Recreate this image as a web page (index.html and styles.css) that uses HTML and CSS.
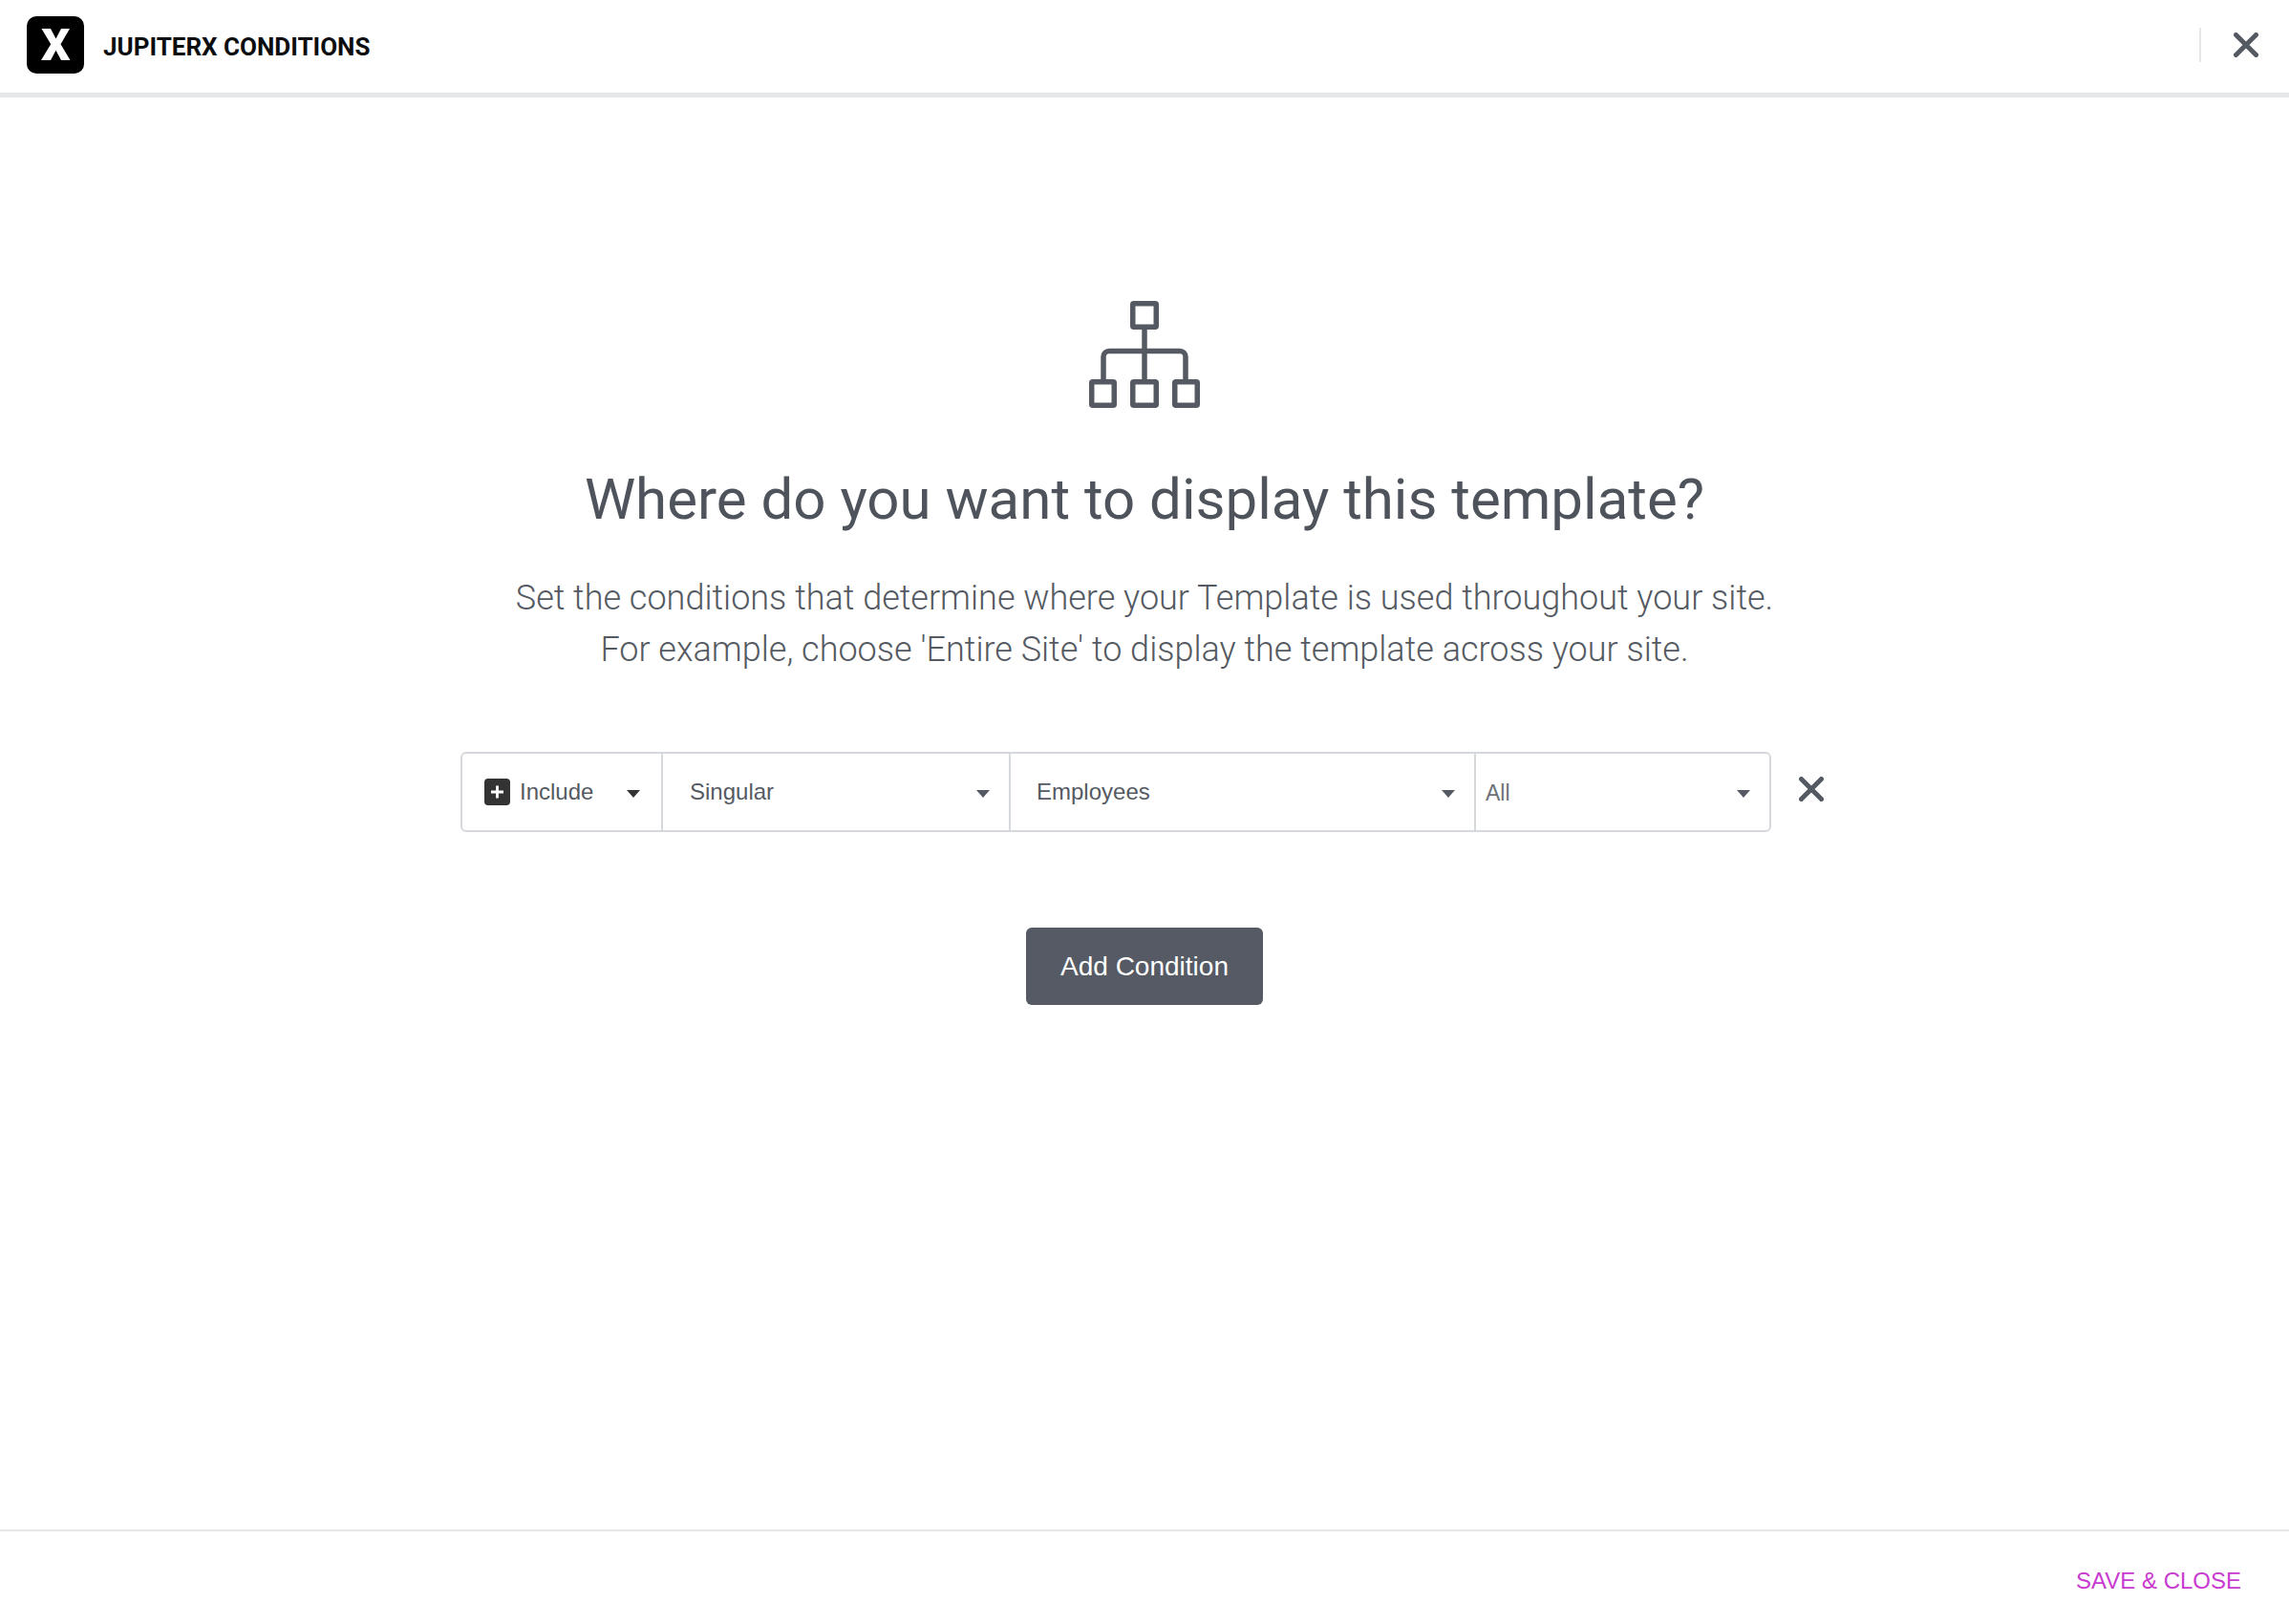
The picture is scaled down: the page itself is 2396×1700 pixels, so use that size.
FILE: index.html
```html
<!DOCTYPE html>
<html lang="en">
<head>
<meta charset="utf-8">
<title>JupiterX Conditions</title>
<link rel="stylesheet" href="styles.css">
</head>
<body>
<div class="app">
  <header class="topbar">
    <div class="logo"><svg viewBox="0 0 60 60" width="60" height="60"><rect width="60" height="60" rx="10" fill="#000"/><path d="M15.500 13H25L30.500 23.500 36 13H45L35.500 29.300 45.500 46H36L30.500 35.800 25 46H15L25.200 29.300Z" fill="#fff"/></svg></div>
    <div class="brand">JUPITERX CONDITIONS</div>
    <div class="topbar-right">
      <span class="vline"></span>
      <svg class="close-icon" viewBox="0 0 26 26" width="26" height="26"><path d="M2.500 2.500L23.500 23.500M23.500 2.500L2.500 23.500" stroke="#555a62" stroke-width="5" stroke-linecap="round" fill="none"/></svg>
    </div>
  </header>
  <main class="content">
    <svg class="tree" viewBox="0 0 116 112" width="116" height="112">
      <g fill="none" stroke="#555a62" stroke-width="5.500" stroke-linejoin="round">
        <rect x="45.750" y="2.750" width="24.500" height="24.500" rx="1"/>
        <rect x="2.750" y="84.750" width="23.500" height="24.500" rx="1"/>
        <rect x="45.750" y="84.750" width="24.500" height="24.500" rx="1"/>
        <rect x="89.750" y="84.750" width="23.500" height="24.500" rx="1"/>
        <path d="M58 28V84M15 84V58.500a6 6 0 0 1 6-6H95a6 6 0 0 1 6 6V84"/>
      </g>
    </svg>
    <h1 class="title">Where do you want to display this template?</h1>
    <p class="intro">Set the conditions that determine where your Template is used throughout your site.<br>For example, choose 'Entire Site' to display the template across your site.</p>
    <div class="row-wrap">
      <div class="cond-row">
        <div class="cell cell-type">
          <span class="plus"><svg viewBox="0 0 27 28" width="27" height="28"><rect width="27" height="28" rx="4" fill="#333"/><path d="M13.500 7.500v13M7 14h13" stroke="#fff" stroke-width="2.800" fill="none"/></svg></span>
          <span class="val">Include</span><span class="caret dark"></span>
        </div>
        <div class="cell cell-sub"><span class="val">Singular</span><span class="caret"></span></div>
        <div class="cell cell-emp"><span class="val">Employees</span><span class="caret"></span></div>
        <div class="cell cell-all"><span class="val small">All</span><span class="caret"></span></div>
      </div>
      <svg class="row-x" viewBox="0 0 26 26" width="26" height="26"><path d="M2.500 2.500L23.500 23.500M23.500 2.500L2.500 23.500" stroke="#555a62" stroke-width="5" stroke-linecap="round" fill="none"/></svg>
    </div>
    <button class="add-btn" type="button">Add Condition</button>
  </main>
  <footer class="bottombar"><a class="save" href="#">SAVE &amp; CLOSE</a></footer>
</div>
</body>
</html>
```
FILE: styles.css
```css
* { box-sizing: border-box; }
html, body { margin: 0; height: 100%; background: #fff; }
.app { height: 1700px; display: flex; flex-direction: column; font-family: Roboto, sans-serif; }
.topbar { height: 102px; flex: none; display: flex; align-items: center; padding: 0 32px 3px 28px; border-bottom: 5px solid #e6e7e8; }
.logo { width: 60px; height: 60px; }
.logo svg { display: block; }
.brand { margin: 3px 0 0 20px; font-size: 26px; font-weight: 700; color: #0c0d0e; }
.topbar-right { margin-left: auto; display: flex; align-items: center; gap: 34px; }
.vline { width: 2px; height: 36px; background: #e6e7e8; }
.close-icon { display: block; }
.content { flex: 1; display: flex; flex-direction: column; align-items: center; padding-top: 213px; }
.tree { display: block; }
.title { margin: 61px 0 0; font-size: 60px; line-height: 70px; font-weight: 400; color: #4f545c; }
.intro { margin: 41px 0 0; font-size: 36px; line-height: 54px; font-weight: 300; color: #555a62; text-align: center; }
.row-wrap { margin-top: 80px; width: 1432px; display: flex; align-items: flex-start; gap: 29px; }
.cond-row { width: 1372px; flex: none; display: flex; height: 84px; border: 2px solid #d5d8dc; border-radius: 6px; }
.cell { display: flex; align-items: center; position: relative; border-left: 2px solid #d5d8dc; font-size: 24px; color: #555a62; }
.cell:first-child { border-left: 0; }
.cell-type { width: 208px; padding-left: 23px; }
.cell-sub { width: 364px; padding-left: 28px; }
.cell-emp { width: 487px; padding-left: 27px; }
.cell-all { flex: 1; padding-left: 10px; }
.plus { display: block; height: 28px; margin-right: 10px; }
.plus svg { display: block; }
.val { font-family: "Liberation Sans", sans-serif; margin-top: -1px; }
.small { margin-top: 2px; font-size: 23px; color: #6d7278; }
.caret { position: absolute; right: 20px; top: 38px; width: 0; height: 0; border-left: 7px solid transparent; border-right: 7px solid transparent; border-top: 8px solid #555a62; }
.caret.dark { border-top-color: #333; right: 22px; }
.row-x { display: block; flex: none; margin-top: 26px; }
.add-btn { margin-top: 100px; width: 248px; height: 81px; border: 0; border-radius: 6px; background: #555a64; color: #fff; font-family: "Liberation Sans", sans-serif; font-size: 28px; }
.bottombar { height: 99px; flex: none; display: flex; align-items: center; justify-content: flex-end; padding-right: 50px; border-top: 2px solid #e6e7e8; }
.save { font-family: "Liberation Sans", sans-serif; font-size: 24px; color: #c93bd0; text-decoration: none; margin-top: 7px; }
```
